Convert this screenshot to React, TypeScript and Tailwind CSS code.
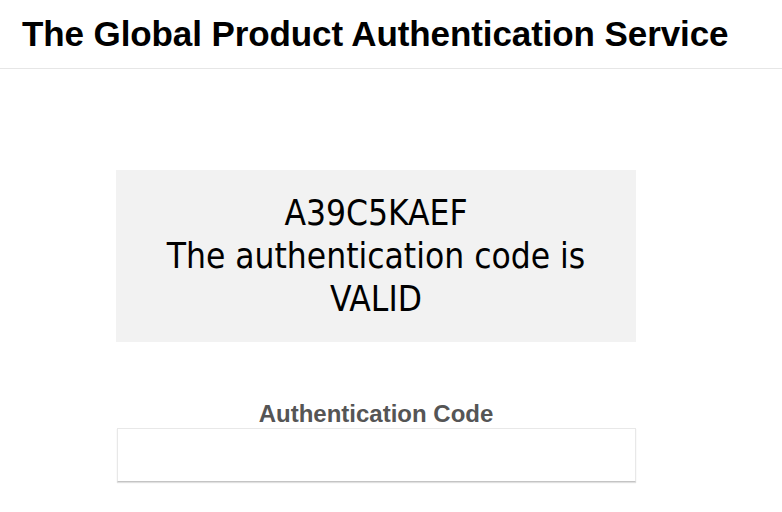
export default function App() {
  return (
    <div className="min-h-screen bg-white">
      {/* Header */}
      <header className="h-[69px] border-b border-[#e6e6e6] px-[22px] flex items-center">
        <h1 className="text-[35px] font-bold text-black font-['Liberation_Sans',Arial,sans-serif] tracking-[-0.1px]">
          The Global Product Authentication Service
        </h1>
      </header>

      <main className="w-[520px] ml-[116px] pt-[101px]">
        {/* Result */}
        <div className="h-[172px] bg-[#f2f2f2] flex flex-col items-center justify-center text-center text-black text-[35px] leading-[43px] font-['DejaVu_Sans_Condensed','DejaVu_Sans',sans-serif]">
          <div>A39C5KAEF</div>
          <div>The authentication code is</div>
          <div>VALID</div>
        </div>

        {/* Form */}
        <form className="mt-[58px] flex flex-col items-center">
          <label
            htmlFor="code"
            className="text-[24px] font-bold text-[#555] font-['Liberation_Sans',Arial,sans-serif] leading-[28px]"
          >
            Authentication Code
          </label>
          <input
            id="code"
            type="text"
            className="w-[519px] h-[54px] border border-[#e8e8e8] border-b-[#c4c4c4] shadow-[0_1px_1px_rgba(0,0,0,0.12)] bg-white outline-none px-3"
          />
        </form>
      </main>
    </div>
  );
}
